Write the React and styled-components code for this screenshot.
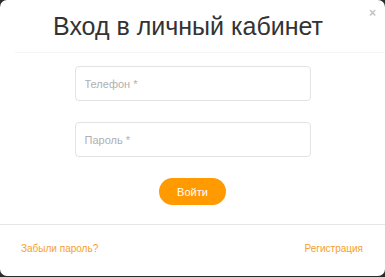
import React from 'react'
import styled, { createGlobalStyle } from 'styled-components'

const GlobalStyle = createGlobalStyle`
  html, body {
    margin: 0;
    padding: 0;
    background: #2b2b2b;
  }
  * {
    box-sizing: border-box;
  }
`

const StyledModal = styled.div`
  position: relative;
  width: 385px;
  height: 276px;
  background-color: #ffffff;
  border-radius: 7px;
  font-family: 'Liberation Sans', Arial, sans-serif;
  display: flex;
  flex-direction: column;
  overflow: hidden;
`

const StyledHeader = styled.div`
  height: 53px;
  display: flex;
  justify-content: center;
  align-items: center;
  border-bottom: 1px solid #f6f6f6;
  margin-left: 15px;
  padding-right: 24px;
`

const StyledTitle = styled.h2`
  margin: 0;
  font-weight: normal;
  font-size: 25px;
  color: #333333;
  padding-top: 1px;
`

const StyledClose = styled.button`
  position: absolute;
  top: 5px;
  right: 9px;
  border: none;
  background: none;
  padding: 0;
  font-family: 'Liberation Sans', Arial, sans-serif;
  font-size: 12px;
  font-weight: bold;
  line-height: 16px;
  color: #c4c4c4;
  cursor: pointer;
`

const StyledForm = styled.form`
  flex: 1;
  display: flex;
  flex-direction: column;
  align-items: center;
  padding-top: 13px;
  row-gap: 21px;
  border-bottom: 1px solid #e6e6e6;
`

const StyledInput = styled.input`
  width: 236px;
  height: 35px;
  border: 1px solid #e3e3e3;
  border-radius: 4px;
  padding: 0 9px;
  font-family: 'Liberation Sans', Arial, sans-serif;
  font-size: 11px;
  color: #333333;
  outline: none;

  &::placeholder {
    color: #b0b0b0;
  }
`

const StyledButton = styled.button`
  width: 67px;
  height: 27px;
  border: none;
  border-radius: 14px;
  background-color: #ff9a00;
  color: #ffffff;
  font-family: 'Liberation Sans', Arial, sans-serif;
  font-size: 11px;
  cursor: pointer;
`

const StyledFooter = styled.div`
  height: 51px;
  display: flex;
  justify-content: space-between;
  align-items: center;
  padding: 0 22px 4px 21px;
`

const StyledLink = styled.a`
  font-size: 10px;
  color: #f5a030;
  text-decoration: none;
  cursor: pointer;
`

function App() {
  return (
    <>
      <GlobalStyle />
      <StyledModal>
        <StyledClose type="button">×</StyledClose>
        <StyledHeader>
          <StyledTitle>Вход в личный кабинет</StyledTitle>
        </StyledHeader>
        <StyledForm onSubmit={(e) => e.preventDefault()}>
          <StyledInput type="tel" placeholder="Телефон *" />
          <StyledInput type="password" placeholder="Пароль *" />
          <StyledButton type="submit">Войти</StyledButton>
        </StyledForm>
        <StyledFooter>
          <StyledLink href="#">Забыли пароль?</StyledLink>
          <StyledLink href="#">Регистрация</StyledLink>
        </StyledFooter>
      </StyledModal>
    </>
  )
}

export default App
